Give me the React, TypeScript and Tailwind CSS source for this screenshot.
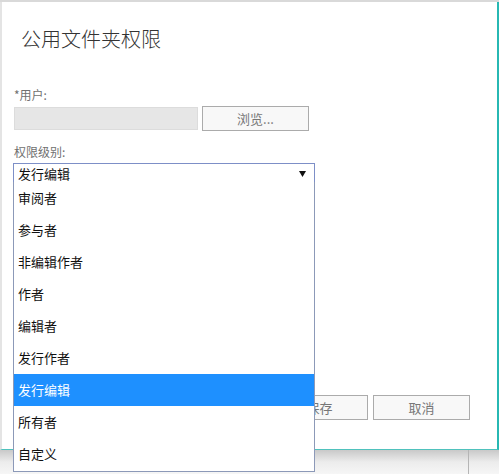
import React from "react";

const items = ["审阅者", "参与者", "非编辑作者", "作者", "编辑者", "发行作者", "发行编辑", "所有者", "自定义"];

export default function App() {
  return (
    <div
      className="relative w-[499px] h-[474px] overflow-hidden bg-[#f2f2f2]"
      style={{ fontFamily: '"Microsoft YaHei", "Noto Sans CJK SC", "Noto Sans", sans-serif' }}
    >
      <div className="h-[2px] bg-[#d9d9d9]" />
      <div className="flex">
        <div className="relative flex h-[448px] w-[499px] flex-col border-l-[2px] border-r-[2px] border-b-[1px] border-l-[#e4e4e4] border-r-[#27b8b3] border-b-[#4fc2bd] bg-white">
          <div className="pl-[19px] pt-[22px] text-[20px] leading-[30px] font-light text-[#333]">公用文件夹权限</div>
          <div className="mt-[33px] pl-[12px] text-[12px] leading-[16px] text-[#707070]">*用户:</div>
          <div className="mt-[3px] flex items-center pl-[12px]">
            <div className="h-[23px] w-[184px] border border-[#dcdcdc] bg-[#e6e6e6]" />
            <button className="ml-[4px] h-[25px] w-[107px] border border-[#ababab] bg-[#f8f8f8] text-[13px] text-[#777]">浏览...</button>
          </div>
          <div className="mt-[13px] pl-[12px] text-[12px] leading-[16px] text-[#707070]">权限级别:</div>
          <div className="ml-[11px] mt-[3px] flex h-[21px] w-[302px] items-center justify-between border border-[#7d8fc7] bg-white pl-[4px] pr-[8px]">
            <span className="text-[13px] leading-[19px] text-[#111]">发行编辑</span>
            <svg width="7" height="6" viewBox="0 0 7 6"><path d="M0 0 H7 L3.5 6 Z" fill="#111" /></svg>
          </div>
          <div className="flex-1" />
          <div className="flex justify-end gap-[5px] pb-[29px] pr-[27px]">
            <button className="h-[25px] w-[97px] border border-[#ababab] bg-[#f8f8f8] text-[13px] text-[#777]">保存</button>
            <button className="h-[25px] w-[97px] border border-[#ababab] bg-[#f8f8f8] text-[13px] text-[#777]">取消</button>
          </div>
        </div>
      </div>
      <div className="relative h-[24px] bg-gradient-to-b from-[#c9c9c9] via-[#ececec] to-[#f6f6f6]">
        <div className="absolute left-[468px] top-0 h-full w-[1px] bg-[#b5b5b5]" />
      </div>
      <div className="absolute left-[13px] top-[182px] w-[302px] border border-t-0 border-[#8c99b8] bg-white pb-[1px]">
        {items.map((it) => (
          <div
            key={it}
            className={
              it === "发行编辑"
                ? "flex h-[32px] items-center bg-[#1e90ff] pl-[4px] text-[13px] text-white"
                : "flex h-[32px] items-center pl-[4px] text-[13px] text-[#111]"
            }
          >
            {it}
          </div>
        ))}
      </div>
    </div>
  );
}
